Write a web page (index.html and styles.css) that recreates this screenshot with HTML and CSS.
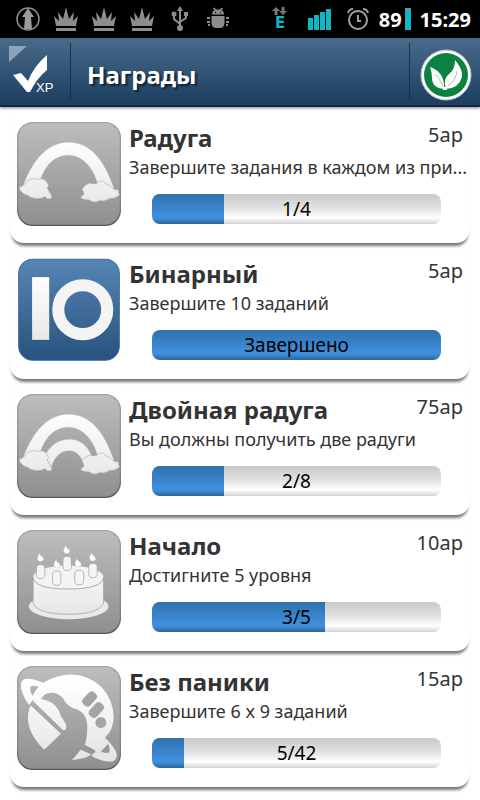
FILE: index.html
```html
<!DOCTYPE html>
<html lang="ru">
<head>
    <meta charset="UTF-8">
    <meta name="viewport" content="width=device-width, initial-scale=1.0">
    <title>Награды</title>
    <link rel="stylesheet" href="styles.css">
</head>
<body>
    <!-- Общие градиенты и фигуры -->
    <svg class="defs" width="0" height="0" aria-hidden="true">
        <defs>
            <linearGradient id="gray" x1="0" y1="0" x2="0" y2="1">
                <stop offset="0" stop-color="#bdbdbd"/>
                <stop offset="1" stop-color="#8f8f8f"/>
            </linearGradient>
            <linearGradient id="blue" x1="0" y1="0" x2="0" y2="1">
                <stop offset="0" stop-color="#5685b5"/>
                <stop offset="1" stop-color="#28527f"/>
            </linearGradient>
            <linearGradient id="edge" x1="0" y1="0" x2="0" y2="1">
                <stop offset="0" stop-color="#a0a0a8"/>
                <stop offset="0.8" stop-color="#808080"/>
                <stop offset="1" stop-color="#555555"/>
            </linearGradient>
            <linearGradient id="white" gradientUnits="userSpaceOnUse" x1="0" y1="50" x2="0" y2="260">
                <stop offset="0" stop-color="#ffffff"/>
                <stop offset="1" stop-color="#e6e6e6"/>
            </linearGradient>
            <g id="tile">
                <rect x="2" y="2" width="306" height="306" rx="45" fill="url(#gray)" stroke="url(#edge)" stroke-width="4"/>
            </g>
            <path id="arc" fill="url(#white)" stroke="#b0b0b0" stroke-width="1" d="M18 190C48 110 92 60 154 60s106 50 136 140l-48-10c-14-54-46-91-90-91-42 0-74 36-84 84z"/>
            <g id="clouds" fill="url(#white)" stroke="#b4b4b4" stroke-width="2">
                <path d="M6 196L18 189Q26 186 32 174Q50 166 60 171L78 170Q90 176 94 190L90 197L94 204Q98 210 104 222L101 229Q90 232 84 222Q72 230 56 228Q40 226 33 219Q12 214 6 196z"/>
                <path d="M189 226L200 214L194 200Q204 184 218 182Q230 188 242 180Q246 171 258 178Q264 186 278 190Q286 204 301 202L305 218Q290 230 275 228Q264 238 246 234Q232 244 214 232L204 232z"/>
            </g>
            <path id="crown" fill="#8d8d8d" d="M3 20L1 10L6 15L5 6L10 13L13 1L16 13L21 6L20 15L25 10L23 20zM3 22h20v3H3z"/>
        </defs>
    </svg>

    <div class="status">
        <div class="status-left">
            <svg width="26" height="26" viewBox="0 0 26 26">
                <circle cx="13" cy="13" r="11" fill="none" stroke="#8d8d8d" stroke-width="1.5"/>
                <path fill="#9a9a9a" d="M13 2l6 9h-3l1 12H9l1-12H7z"/>
            </svg>
            <svg width="26" height="26" viewBox="0 0 26 26"><use href="#crown"/></svg>
            <svg width="26" height="26" viewBox="0 0 26 26"><use href="#crown"/></svg>
            <svg width="26" height="26" viewBox="0 0 26 26"><use href="#crown"/></svg>
            <svg width="26" height="26" viewBox="0 0 26 26">
                <path fill="none" stroke="#8d8d8d" stroke-width="2" d="M13 4v18M7 9v4l6 5M19 8v4l-6 4"/>
                <path fill="#8d8d8d" d="M13 0l3 5h-6zM17 6h4v4h-4z"/>
                <circle cx="7" cy="8" r="2.5" fill="#8d8d8d"/>
                <circle cx="13" cy="22" r="3" fill="#8d8d8d"/>
            </svg>
            <svg width="26" height="26" viewBox="0 0 26 26">
                <path fill="#8d8d8d" d="M7 8.500c0-3 2-5 6-5s6 2 6 5zM6.500 10h13v7q0 5-5 5h-3q-5 0-5-5z"/>
                <path fill="none" stroke="#8d8d8d" stroke-width="2" d="M9 2l1 2M17 2l-1 2M5 12H2M5 16H2M5 19H3M21 12h3M21 16h3M21 19h2"/>
                <path stroke="#000" d="M10 6.500h1M15 6.500h1"/>
            </svg>
        </div>
        <div class="status-right">
            <svg width="18" height="28" viewBox="0 0 18 28">
                <path fill="#777" d="M4 2l4 4H5.500v4h-3V6H0zM11 10l4-4h-2.500V2h-3v4H7z"/>
                <text x="3" y="23" class="edge-text">E</text>
            </svg>
            <svg class="signal" width="26" height="24" viewBox="0 0 26 24">
                <path fill="#13b7c4" d="M1 11h5v12H1zM7 8h5v15H7zM13 5h5v18h-5zM19 2h5v21h-5z"/>
            </svg>
            <svg class="alarm" width="22" height="24" viewBox="0 0 22 24">
                <circle cx="11" cy="13" r="9" fill="none" stroke="#a0a0a0" stroke-width="2"/>
                <path fill="none" stroke="#a0a0a0" stroke-width="2" d="M11 8v6h3M1 6q1-4 5-4M21 6q-1-4-5-4"/>
            </svg>
            <span class="battery">89</span>
            <span class="battery-bar"></span>
            <span class="clock">15:29</span>
        </div>
    </div>

    <header class="header">
        <button class="home" aria-label="Главная">
            <svg width="48" height="54" viewBox="0 0 48 54">
                <path fill="#8ea3b7" d="M1 1h18L1 17z"/>
                <path fill="#fff" d="M5 30L13 28L20 36Q26 21 39 10V25Q29 33 22 47H19z"/>
                <text x="28" y="47" class="xp">XP</text>
            </svg>
        </button>
        <h1>Награды</h1>
        <button class="profile" aria-label="Профиль">
            <svg width="52" height="52" viewBox="0 0 52 52">
                <circle cx="26" cy="26" r="25" fill="#fff" stroke="#b9c3c9"/>
                <circle cx="26" cy="26" r="22" fill="#0b8240"/>
                <path fill="#fff" d="M10 18Q25 23 24 40Q12 39 12 29Q12 23 10 18zM35 11Q43 20 42 28Q39 39 26 40Q22 30 30 24Q35 20 35 11zM22 38h5v3h-4z"/>
                <path fill="none" stroke="#9cc9ae" d="M15 25Q20 30 23 37M37 22Q36 31 28 37"/>
            </svg>
        </button>
    </header>

    <main class="awards">
        <article class="award">
            <svg class="icon" viewBox="0 0 310 310">
                <use href="#tile"/>
                <use href="#arc"/>
                <use href="#clouds"/>
            </svg>
            <div class="info">
                <div class="top">
                    <h2>Радуга</h2>
                    <span class="points">5ap</span>
                </div>
                <p>Завершите задания в каждом из при...</p>
                <div class="bar" role="progressbar" aria-label="Радуга" aria-valuenow="1" aria-valuemax="4">
                    <div class="fill" style="width: 25%"></div>
                    <span>1/4</span>
                </div>
            </div>
        </article>

        <article class="award">
            <svg class="icon" viewBox="0 0 310 310">
                <rect x="5" y="4" width="300" height="301" rx="42" fill="url(#blue)" stroke="#3e6b99" stroke-width="3"/>
                <rect x="45" y="57" width="51" height="187" fill="url(#white)"/>
                <circle cx="196" cy="154" r="73" fill="none" stroke="#f4f4f4" stroke-width="36"/>
            </svg>
            <div class="info">
                <div class="top">
                    <h2>Бинарный</h2>
                    <span class="points">5ap</span>
                </div>
                <p>Завершите 10 заданий</p>
                <div class="bar" role="progressbar" aria-label="Бинарный" aria-valuenow="10" aria-valuemax="10">
                    <div class="fill" style="width: 100%"></div>
                    <span>Завершено</span>
                </div>
            </div>
        </article>

        <article class="award">
            <svg class="icon" viewBox="0 0 310 310">
                <use href="#tile"/>
                <use href="#arc"/>
                <path fill="url(#white)" stroke="#b0b0b0" stroke-width="1" d="M84 182c18-32 42-47 72-47s54 17 68 52l-27 18c-8-22-22-36-41-36-24 0-44 16-54 50z"/>
                <use href="#clouds"/>
            </svg>
            <div class="info">
                <div class="top">
                    <h2>Двойная радуга</h2>
                    <span class="points">75ap</span>
                </div>
                <p>Вы должны получить две радуги</p>
                <div class="bar" role="progressbar" aria-label="Двойная радуга" aria-valuenow="2" aria-valuemax="8">
                    <div class="fill" style="width: 25%"></div>
                    <span>2/8</span>
                </div>
            </div>
        </article>

        <article class="award">
            <svg class="icon" viewBox="0 0 310 310">
                <use href="#tile"/>
                <ellipse cx="154" cy="228" rx="119" ry="38" fill="#e9e9e9"/>
                <path fill="url(#white)" stroke="#999" stroke-width="2" d="M48 142v76q14 33 105 33t105-33v-76z"/>
                <ellipse cx="153" cy="141" rx="105" ry="35" fill="#f3f3f3"/>
                <path fill="none" stroke="#888" stroke-width="2" d="M48 141q4 35 105 35t105-35"/>
                <g fill="#f4f4f4" stroke="#999" stroke-width="2">
                    <rect x="58" y="103" width="25" height="42" rx="12"/>
                    <rect x="137" y="78" width="25" height="43" rx="12"/>
                    <rect x="214" y="99" width="25" height="43" rx="12"/>
                    <rect x="106" y="122" width="25" height="43" rx="12"/>
                    <rect x="172" y="120" width="27" height="43" rx="12"/>
                </g>
                <g fill="#fff" stroke="#aaa">
                    <path id="flame" d="M68 68q-9 12-7 19 2 7 9 7 10 0 10-9-2-4-7-7-5-4-5-10z"/>
                    <use href="#flame" x="78" y="-23"/>
                    <use href="#flame" x="155" y="-1"/>
                    <use href="#flame" x="49" y="19"/>
                    <use href="#flame" x="112" y="16"/>
                </g>
            </svg>
            <div class="info">
                <div class="top">
                    <h2>Начало</h2>
                    <span class="points">10ap</span>
                </div>
                <p>Достигните 5 уровня</p>
                <div class="bar" role="progressbar" aria-label="Начало" aria-valuenow="3" aria-valuemax="5">
                    <div class="fill" style="width: 60%"></div>
                    <span>3/5</span>
                </div>
            </div>
        </article>

        <article class="award">
            <svg class="icon" viewBox="0 0 310 310">
                <use href="#tile"/>
                <!-- планета с кольцом -->
                <g fill="url(#white)">
                    <path d="M51 107L136 190Q144 195 147 184Q149 174 140 164Q130 150 124 132Q110 104 72 98Q84 76 108 80Q132 84 144 108Q154 122 180 130Q206 142 209 172Q211 205 202 236L234 252L262 214Q288 190 288 152A127 127 0 0 0 161 25Q120 25 82 48Q56 66 45 92z"/>
                    <path d="M41 118L131 202L81 250Q20 190 36 130z"/>
                    <path d="M36 117Q8 75 12 52Q16 36 34 38Q58 40 86 54L70 64Q52 55 40 61Q36 76 52 98L44 106z"/>
                    <path d="M260 212Q300 250 297 270Q294 286 275 285Q250 284 222 268L240 240z"/>
                    <path d="M164 280L190 250L222 264Q200 278 164 280z"/>
                </g>
                <path fill="#989898" d="M272 232L250 255Q262 262 276 257Q277 244 272 232z"/>
                <path stroke="#979797" stroke-width="9" d="M198 238L232 257"/>
                <g fill="#a5a5a5">
                    <rect x="192" y="84" width="48" height="29" rx="12" transform="rotate(-47 216 98)"/>
                    <rect x="211" y="117" width="50" height="29" rx="12" transform="rotate(-47 236 131)"/>
                    <rect x="234" y="153" width="32" height="32" rx="15"/>
                </g>
            </svg>
            <div class="info">
                <div class="top">
                    <h2>Без паники</h2>
                    <span class="points">15ap</span>
                </div>
                <p>Завершите 6 x 9 заданий</p>
                <div class="bar" role="progressbar" aria-label="Без паники" aria-valuenow="5" aria-valuemax="42">
                    <div class="fill" style="width: 11%"></div>
                    <span>5/42</span>
                </div>
            </div>
        </article>
    </main>
</body>
</html>
```
FILE: styles.css
```css
* {
    box-sizing: border-box;
}
body {
    margin: 0;
    min-height: 100vh;
    background-color: #fff;
    color: #333;
    font-family: "Noto Sans", "Open Sans", sans-serif;
}
h1, h2, p {
    margin: 0;
}
svg {
    display: block;
    flex-shrink: 0;
}
.defs {
    position: absolute;
}
button {
    background: none;
    border: none;
    padding: 0;
    cursor: pointer;
}

/* Строка состояния */
.status {
    display: flex;
    justify-content: space-between;
    align-items: center;
    height: 38px;
    padding: 0 9px 0 15px;
    background-color: #000;
    color: #fff;
}
.status-left {
    display: flex;
    gap: 12px;
}
.status-right {
    display: flex;
    align-items: center;
    font-size: 20px;
    font-weight: bold;
}
.edge-text {
    font: bold 15px "DejaVu Sans", sans-serif;
    fill: #13b7c4;
}
.signal {
    margin-left: 17px;
}
.alarm {
    margin-left: 14px;
}
.battery {
    margin-left: 10px;
}
.battery-bar {
    width: 6px;
    height: 22px;
    margin: 0 9px 0 3px;
    background: linear-gradient(#888 10%, #13b7c4 10%);
}

/* Шапка */
.header {
    display: flex;
    align-items: center;
    height: 69px;
    background: linear-gradient(#496a8b, #1b3e5f);
    border-bottom: 2px solid #12283d;
    box-shadow: 0 1px 3px rgba(0, 0, 0, 0.5);
}
.home {
    width: 71px;
    height: 57px;
    padding-left: 8px;
    border-right: 1px solid #22303f;
}
.xp {
    font: 13px "Liberation Sans", sans-serif;
    fill: #fff;
}
.header h1 {
    flex: 1;
    padding: 6px 0 0 16px;
    color: #fff;
    font-size: 24px;
    line-height: 32px;
    text-shadow: 2px 2px 2px rgba(0, 0, 0, 0.6);
}
.profile {
    width: 71px;
    height: 57px;
    padding: 6px 0 0 10px;
    border-left: 1px solid #1c3248;
}

/* Список наград */
.awards {
    padding-bottom: 13px;
}
.award {
    display: flex;
    gap: 8px;
    height: 136px;
    padding: 15px 7px 0;
    margin: 0 10px;
    border-radius: 0 0 14px 14px;
    box-shadow: 0 5px 3px -2px #777;
}
.icon {
    width: 104px;
    height: 104px;
}
.info {
    flex: 1;
    min-width: 0;
}
.top {
    display: flex;
    justify-content: space-between;
}
.top h2 {
    font-size: 24px;
    line-height: 32px;
}
.points {
    font-size: 20px;
    line-height: 26px;
}
.info p {
    margin-right: -7px;
    overflow: hidden;
    font-size: 18px;
    line-height: 26px;
    text-overflow: ellipsis;
    white-space: nowrap;
}
.bar {
    position: relative;
    height: 30px;
    margin: 14px 22px 0 23px;
    border-radius: 8px;
    overflow: hidden;
    background: linear-gradient(#c9c9c9, #e4e4e4 50%, #fff 80%, #d2d2d2);
    color: #000;
    font-size: 19px;
    line-height: 30px;
    text-align: center;
}
.fill {
    height: 100%;
    background: linear-gradient(#3170a9, #3c8cd8 65%, #3f8fdb 80%, #2c659b);
}
.bar span {
    position: absolute;
    inset: 0;
}
```
